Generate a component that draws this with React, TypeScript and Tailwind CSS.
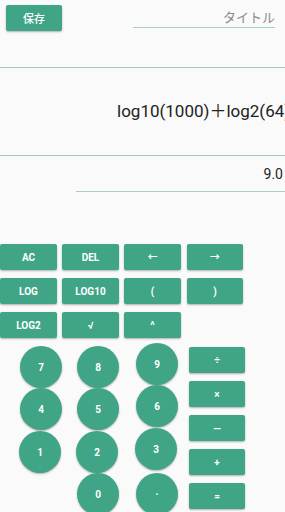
import React from "react";

const G = "bg-[#40a486]";

function Rect({ label, w = "w-[57px]" }: { label: string; w?: string }) {
  return (
    <div
      className={`${w} h-[26px] ${G} rounded-[2px] shadow-[0_1px_2px_rgba(0,0,0,0.3)] flex items-center justify-center text-white text-[10px] font-bold`}
    >
      {label}
    </div>
  );
}

function Circle({ label, cls = "" }: { label: string; cls?: string }) {
  return (
    <div
      className={`w-[42px] h-[42px] rounded-full ${G} shadow-[0_1px_2px_rgba(0,0,0,0.3)] flex items-center justify-center text-white text-[10px] font-bold ${cls}`}
    >
      {label}
    </div>
  );
}

export default function App() {
  return (
    <div
      className="w-[285px] h-[512px] bg-[#fafafa] overflow-hidden relative"
      style={{ fontFamily: "Roboto, 'Noto Sans CJK JP', sans-serif" }}
    >
      {/* top bar */}
      <div className="flex items-start h-[67px]">
        <div className="mt-[5px] ml-[6px] w-[56px] h-[26px] bg-[#40a486] rounded-[2px] shadow-[0_1px_2px_rgba(0,0,0,0.3)] flex items-center justify-center text-white text-[11px] font-medium" style={{ fontFamily: "'Noto Sans CJK JP', sans-serif" }}>
          保存
        </div>
        <div className="ml-[71px] mt-[6px] w-[142px] h-[22px] border-b border-[#a8cfc2] flex items-center justify-end text-[13px] text-[#8a8a8a] leading-none" style={{ fontFamily: "'Noto Sans CJK JP', sans-serif" }}>
          タイトル
        </div>
      </div>
      <div className="h-px bg-[#a3c9bc]" />
      <div className="h-[87px] flex items-center pl-[117px] whitespace-nowrap text-[17px] text-[#222]">
        log10(1000)＋log2(64)
      </div>
      <div className="h-px bg-[#a3c9bc]" />
      <div className="ml-[76px] h-[36px] border-b border-[#a8cfc2] flex items-end justify-end pb-[6px] pr-[2px] text-[14px] text-[#222]">
        9.0
      </div>

      {/* function buttons */}
      <div className="mt-[52px] flex flex-col gap-[8px]">
        <div className="flex gap-[5px]">
          <Rect label="AC" />
          <Rect label="DEL" />
          <Rect label="←" />
          <div className="ml-[1px]"><Rect label="→" w="w-[56px]" /></div>
        </div>
        <div className="flex gap-[5px]">
          <Rect label="LOG" />
          <Rect label="LOG10" />
          <Rect label="(" />
          <div className="ml-[1px]"><Rect label=")" w="w-[56px]" /></div>
        </div>
        <div className="flex gap-[5px]">
          <Rect label="LOG2" />
          <Rect label="√" />
          <Rect label="^" />
        </div>
      </div>

      {/* keypad */}
      <div className="flex items-start mt-[8px]">
        <div className="ml-[20px] flex flex-col">
          <Circle label="7" />
          <Circle label="4" />
          <Circle label="1" cls="mt-px -ml-[1px]" />
        </div>
        <div className="ml-[15px] flex flex-col">
          <Circle label="8" />
          <Circle label="5" />
          <Circle label="2" cls="mt-px -ml-[1px]" />
          <Circle label="0" />
        </div>
        <div className="ml-[17px] -mt-[3px] flex flex-col">
          <Circle label="9" />
          <Circle label="6" />
          <Circle label="3" cls="mt-px -ml-[1px]" />
          <Circle label="·" cls="mt-[3px]" />
        </div>
        <div className="ml-[11px] mt-[1px] flex flex-col gap-[8px]">
          <Rect label="÷" w="w-[56px]" />
          <Rect label="×" w="w-[56px]" />
          <Rect label="—" w="w-[56px]" />
          <Rect label="+" w="w-[56px]" />
          <Rect label="=" w="w-[56px]" />
        </div>
      </div>
    </div>
  );
}
